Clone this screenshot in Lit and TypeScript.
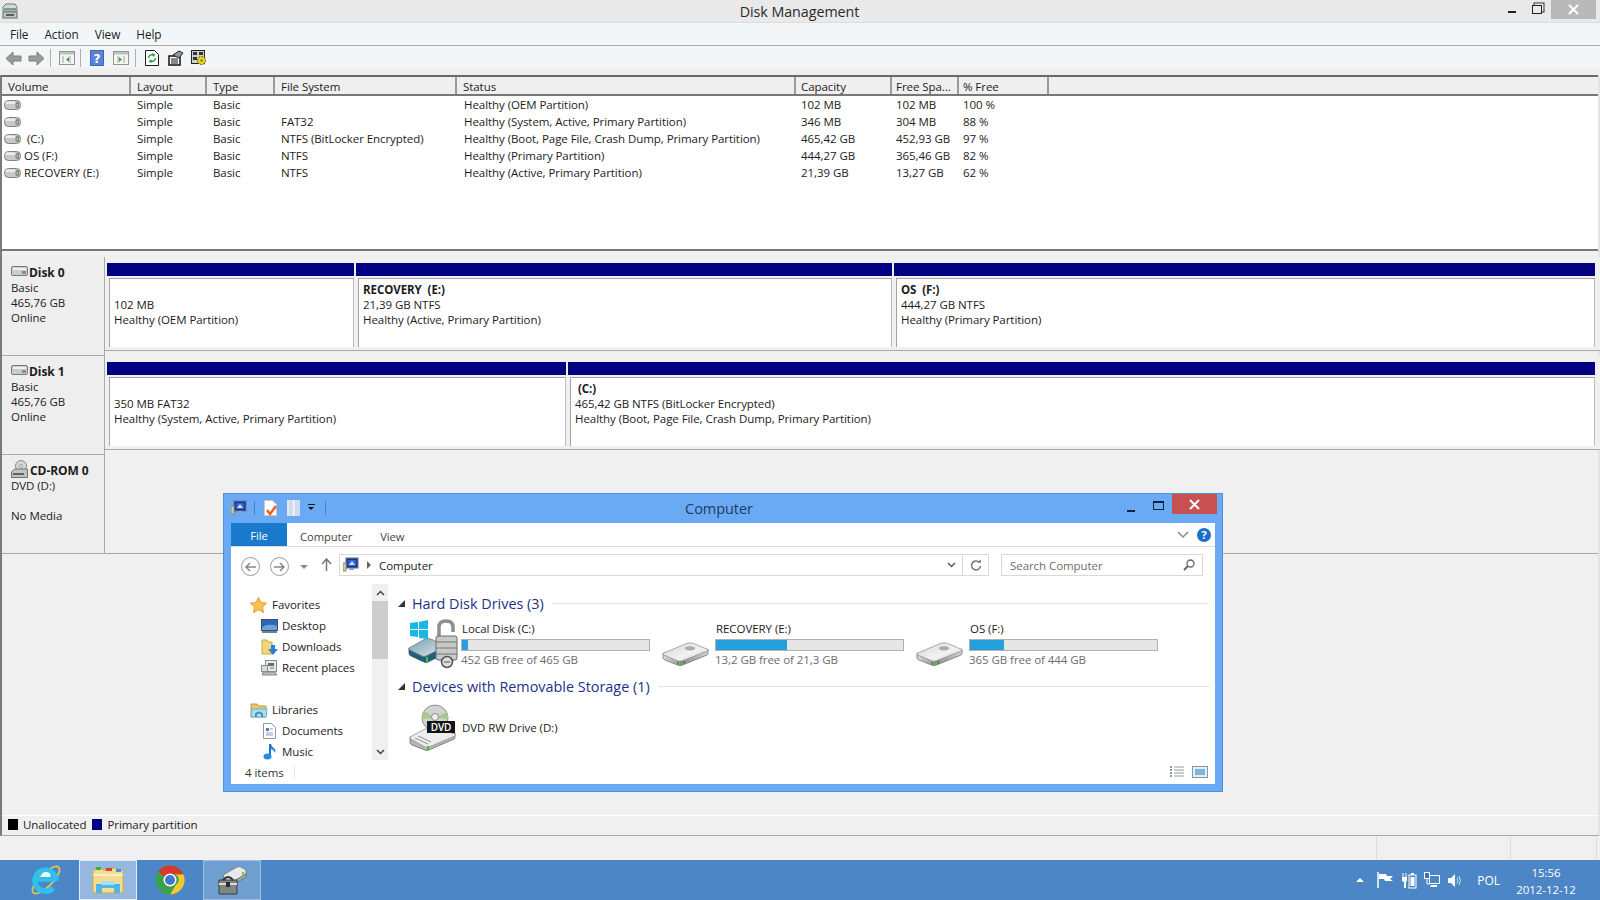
import { LitElement, html, css } from 'lit';
import { customElement } from 'lit/decorators.js';

const volumes = [
  ['', 'Simple', 'Basic', '', 'Healthy (OEM Partition)', '102 MB', '102 MB', '100 %'],
  ['', 'Simple', 'Basic', 'FAT32', 'Healthy (System, Active, Primary Partition)', '346 MB', '304 MB', '88 %'],
  ['\u00a0(C:)', 'Simple', 'Basic', 'NTFS (BitLocker Encrypted)', 'Healthy (Boot, Page File, Crash Dump, Primary Partition)', '465,42 GB', '452,93 GB', '97 %'],
  ['OS (F:)', 'Simple', 'Basic', 'NTFS', 'Healthy (Primary Partition)', '444,27 GB', '365,46 GB', '82 %'],
  ['RECOVERY (E:)', 'Simple', 'Basic', 'NTFS', 'Healthy (Active, Primary Partition)', '21,39 GB', '13,27 GB', '62 %'],
];
const headers = ['Volume', 'Layout', 'Type', 'File System', 'Status', 'Capacity', 'Free Spa...', '% Free', ''];

const disks = [
  {
    name: 'Disk 0', lines: ['Basic', '465,76 GB', 'Online'], icon: 'hdd',
    parts: [
      { w: 249, lines: ['', '102 MB', 'Healthy (OEM Partition)'] },
      { w: 538, title: 'RECOVERY  (E:)', lines: ['21,39 GB NTFS', 'Healthy (Active, Primary Partition)'] },
      { w: 703, title: 'OS  (F:)', lines: ['444,27 GB NTFS', 'Healthy (Primary Partition)'] },
    ],
  },
  {
    name: 'Disk 1', lines: ['Basic', '465,76 GB', 'Online'], icon: 'hdd',
    parts: [
      { w: 461, lines: ['', '350 MB FAT32', 'Healthy (System, Active, Primary Partition)'] },
      { w: 1029, title: '\u00a0(C:)', lines: ['465,42 GB NTFS (BitLocker Encrypted)', 'Healthy (Boot, Page File, Crash Dump, Primary Partition)'] },
    ],
  },
  { name: 'CD-ROM 0', lines: ['DVD (D:)', '', 'No Media'], icon: 'cd', parts: [] },
];

const drives = [
  { name: 'Local Disk (C:)', free: '452 GB free of 465 GB', used: 3, icon: 'locked' },
  { name: 'RECOVERY (E:)', free: '13,2 GB free of 21,3 GB', used: 38, icon: 'plain' },
  { name: 'OS (F:)', free: '365 GB free of 444 GB', used: 18, icon: 'plain' },
];

const smallDisk = html`<svg class="ic" width="17" height="10" viewBox="0 0 17 10">
  <rect x=".5" y=".5" width="16" height="9" rx="4" fill="#c6c9c6" stroke="#7d817f"/>
  <rect x="1.500" y="1.500" width="10" height="2.500" rx="1" fill="#eceeec"/>
  <rect x="11.500" y="2" width="3.500" height="6" rx="1.500" fill="#7f8785"/><rect x="12.500" y="4" width="1.200" height="2.500" fill="#a9d58a"/>
</svg>`;

const labelDisk = html`<svg class="ic" width="17" height="10" viewBox="0 0 17 10">
  <rect x=".5" y=".5" width="16" height="9" rx="1.500" fill="#c9cccb" stroke="#77797a"/>
  <rect x="2" y="2" width="13" height="2" fill="#eff0ef"/><rect x="11" y="5" width="4" height="3" fill="#8a8f8d"/>
</svg>`;

const cdDisk = html`<svg class="ic" width="18" height="18" viewBox="0 0 18 18">
  <circle cx="10" cy="6" r="5.500" fill="#d5d8d6" stroke="#8b8e8d"/><circle cx="10" cy="6" r="1.500" fill="#fff" stroke="#999"/>
  <path d="M.5 12l3-3h13v8.500h-16z" fill="#c2c5c4" stroke="#6e7170"/><rect x="2" y="13" width="11" height="2" fill="#5e6261"/>
</svg>`;

const bigDisk = html`<svg class="ic" width="47" height="27" viewBox="0 0 47 32" preserveAspectRatio="none">
  <defs>
    <linearGradient id="hddTop" x1="0" y1="0" x2="1" y2="1"><stop offset="0" stop-color="#d5d6d5"/><stop offset=".6" stop-color="#f1f2f1"/><stop offset="1" stop-color="#b9bcbb"/></linearGradient>
    <linearGradient id="hddSide" x1="0" y1="0" x2="1" y2="0"><stop offset="0" stop-color="#d6d7d6"/><stop offset=".45" stop-color="#8f9391"/><stop offset="1" stop-color="#d1d3d2"/></linearGradient>
  </defs>
  <path d="M1 17v5q0 2 2 3l13 6q2 1 4 0l25-12q1-1 1-2v-5z" fill="url(#hddSide)" stroke="#696e6c" stroke-width=".8"/>
  <path d="M1 17 25 5q3-1 6 0l14 7q2 1 1 2L20 26q-2 1-4 0L2 19q-2-1-1-2z" fill="url(#hddTop)" stroke="#8e9290" stroke-width=".8"/>
  <ellipse cx="28" cy="11" rx="5" ry="2.500" fill="#a9acab"/>
  <path d="M19 26v4.500" stroke="#39c23c" stroke-width="2"/><path d="M16 27v3M22 26v3" stroke="#3f4341" stroke-width="1"/>
</svg>`;

const lockedIcon = html`<svg class="ic" width="50" height="50" viewBox="0 0 50 50">
  <defs><linearGradient id="lockTop" x1="0" y1="0" x2="1" y2="1"><stop offset="0" stop-color="#75a2b4"/><stop offset="1" stop-color="#dfe7ea"/></linearGradient></defs>
  <g fill="#16b8e6"><path d="M2 4l8-1v7H2zM11 3l9-2v9h-9zM2 11h8v7l-8-1zM11 11h9v9l-9-1z"/></g>
  <path d="M1 29v5q0 2 2 3l13 6q2 1 4 0l18-9v-7z" fill="#1f5f7c" stroke="#39505b" stroke-width=".8"/>
  <path d="M1 29l16-9q3-1 6 0l15 7-20 10q-2 1-4 0L2 31q-2-1-1-2z" fill="url(#lockTop)" stroke="#6e8590" stroke-width=".8"/>
  <path d="M19 38v5" stroke="#39c23c" stroke-width="2"/>
  <path d="M31 18V8q0-6 7-6t7 6v5" fill="none" stroke="#8c8f8e" stroke-width="3.500"/>
  <rect x="28" y="17" width="21" height="24" rx="2" fill="#c6c9c8" stroke="#696c6b"/>
  <path d="M28 23h21M28 29h21M28 35h21" stroke="#727575"/>
  <circle cx="39" cy="43" r="5.500" fill="#dcdedd" stroke="#4f5251" stroke-width="1.500"/><path d="M36 43h6" stroke="#4f5251"/>
</svg>`;

const dvdIcon = html`<svg class="ic" width="47" height="47" viewBox="0 0 47 47">
  <circle cx="26" cy="14" r="13" fill="#cfd3d0" stroke="#8f9491"/>
  <path d="M26 14 15 7a13 13 0 0 0-2 8zM26 14l12-6a13 13 0 0 1 1 7z" fill="#a8c98c"/>
  <circle cx="26" cy="13" r="3.500" fill="#eee" stroke="#888"/>
  <path d="M1 33v5q0 2 2 3l13 5q2 1 4 0l25-11q1-1 1-2v-4z" fill="#b4b7b6" stroke="#696e6c" stroke-width=".8"/>
  <path d="M1 33l15-8h16l14 5q1 1 0 2L20 43q-2 1-4 0L2 35q-2-1-1-2z" fill="#ecedec" stroke="#8e9290" stroke-width=".8"/>
  <path d="M6 34l13 6M9 32l13 6" stroke="#8c8f8e"/>
  <rect x="18" y="17" width="28" height="12" fill="#141414"/>
  <text x="32" y="27" text-anchor="middle" font-family="Open Sans, sans-serif" font-size="10" font-weight="600" fill="#fff">DVD</text>
  <path d="M19 42v4" stroke="#39c23c" stroke-width="2"/>
</svg>`;

const appIcon = html`<svg width="16" height="16" viewBox="0 0 16 16">
  <path d="M1 4l3-3h9l2 3v4H1z" fill="#d4d9d6" stroke="#6d7a76"/><rect x="2" y="5" width="12" height="2" fill="#7d9990"/>
  <rect x="1" y="9" width="14" height="6" fill="#bfc5c2" stroke="#62706b"/><rect x="4" y="11" width="8" height="2" fill="#55625f"/>
</svg>`;

const arrowL = html`<svg width="17" height="15" viewBox="0 0 17 15"><path d="M8 1 1 7.500 8 14v-4h8V5H8z" fill="#9a9c9a" stroke="#7e807e"/></svg>`;
const arrowR = html`<svg width="17" height="15" viewBox="0 0 17 15"><path d="M9 1l7 6.500L9 14v-4H1V5h8z" fill="#9a9c9a" stroke="#7e807e"/></svg>`;
const paneIcon = (right: boolean) => html`<svg width="16" height="14" viewBox="0 0 16 14">
  <rect x=".5" y=".5" width="15" height="13" fill="#f5f6f4" stroke="#8e9794"/><rect x="1" y="1" width="14" height="2.500" fill="#b8c2bf"/>
  <path d="${right ? 'M5 5v7M11 5v7' : 'M4 5v7M11 5v7'}" stroke="#9aa3a0"/>
  <path d="${right ? 'M6 6v5l3-2.500z' : 'M10 6v5L7 8.500z'}" fill="#3f9b4c"/>
</svg>`;
const helpIcon = html`<svg width="14" height="16" viewBox="0 0 14 16"><rect width="14" height="16" fill="#3b64bb"/><rect x="1" y="1" width="12" height="14" fill="#5a82d6"/><text x="7" y="13" text-anchor="middle" font-family="DejaVu Sans, sans-serif" font-size="12" font-weight="700" fill="#fff">?</text></svg>`;
const refreshIcon = html`<svg width="14" height="16" viewBox="0 0 14 16"><path d="M.5.5h9l4 4v11H.5z" fill="#fff" stroke="#1a1a1a"/>
  <path d="M3.500 8a3.500 3.500 0 0 1 5-3" fill="none" stroke="#25a243" stroke-width="1.500"/><path d="M7 3l3.500 1.500L8 7z" fill="#25a243"/>
  <path d="M10.500 8a3.500 3.500 0 0 1-5 3" fill="none" stroke="#25a243" stroke-width="1.500"/><path d="M7 13 3.500 11.500 6 9z" fill="#25a243"/></svg>`;
const propsIcon = html`<svg width="16" height="16" viewBox="0 0 16 16"><path d="M1 6h11v9H1z" fill="#fff" stroke="#111" stroke-width="1.500"/><path d="M3 9h7M3 11h7M3 13h7" stroke="#111"/><path d="M5 5l6-4 4 2-4 5z" fill="#8d979c" stroke="#222"/></svg>`;
const gearIcon = html`<svg width="16" height="16" viewBox="0 0 16 16"><rect x=".5" y=".5" width="13" height="13" fill="#cfd0c9" stroke="#222"/><path d="M2 2h4v3H2zM8 2h4v3H8zM2 7h4v3H2z" fill="#333"/><circle cx="10.500" cy="10.500" r="4" fill="#e9d12a" stroke="#5c5200" stroke-dasharray="2 1"/><circle cx="10.500" cy="10.500" r="1" fill="#5c5200"/></svg>`;

const computerIcon = html`<svg width="16" height="16" viewBox="0 0 16 16"><rect x="3" y="1" width="12" height="10" fill="#173a9a" stroke="#6d7480"/><path d="M5 3h8v6H5z" fill="#2f63d6"/><path d="M6 8l3-4 3 4z" fill="#cfe0ff"/><path d="M7 11h4v2H6z" fill="#99a0a6"/><rect x="0" y="6" width="3" height="8" fill="#cfd78c" stroke="#888"/></svg>`;
const docCheck = html`<svg width="14" height="16" viewBox="0 0 14 16"><path d="M.5.500h8l4 4v11h-12z" fill="#fff" stroke="#c9c9c9"/><path d="M3 10l3 4 6-8" fill="none" stroke="#e4622c" stroke-width="2.500"/></svg>`;
const slimFolder = html`<svg width="13" height="16" viewBox="0 0 13 16"><rect width="13" height="16" fill="#cfdcee"/><rect x="6" width="1.500" height="16" fill="#f1f5fa"/><rect width="2" height="16" fill="#dfe8f3"/></svg>`;

const star = html`<svg width="17" height="16" viewBox="0 0 17 16"><path d="M8.500.5l2.400 5 5.600.7-4 3.800 1 5.500-5-2.700-5 2.700 1-5.500-4-3.800 5.600-.7z" fill="#f7c54e" stroke="#e29b2d"/></svg>`;
const desktop = html`<svg width="17" height="14" viewBox="0 0 17 14"><rect x=".5" y=".5" width="16" height="11" fill="#2a68b8" stroke="#3a4f6d"/><path d="M1 8q7-4 15-1v4H1z" fill="#6ba1dc"/><rect x="1" y="12" width="15" height="2" fill="#6f7f94"/></svg>`;
const downloads = html`<svg width="17" height="16" viewBox="0 0 17 16"><path d="M1 15V1h5l1 2h4v12z" fill="#f1d77a" stroke="#c9a94a"/><path d="M10 6h4v4h3l-5 6-5-6h3z" fill="#2b7fd4"/></svg>`;
const recent = html`<svg width="17" height="16" viewBox="0 0 17 16"><rect x="4.500" y=".5" width="11" height="11" fill="#e6eaea" stroke="#848e8e"/><path d="M7 3h6v3H7z" fill="#62707a"/><rect x=".5" y="5.500" width="6" height="6" fill="#d7dcdc" stroke="#848e8e"/><path d="M2 12h12l2 3H1z" fill="#b6bdbd" stroke="#848e8e"/><path d="M9 8h4" stroke="#62707a"/></svg>`;
const libraries = html`<svg width="18" height="16" viewBox="0 0 18 16"><path d="M1 15V2h6l2 2h7v11z" fill="#e7c766" stroke="#b69a44"/><path d="M1 15l1-8h15l-1 8z" fill="#a9dff0" stroke="#6fb2c9"/><path d="M6 15v-3q3-3 6 0v3" fill="none" stroke="#3d93bd" stroke-width="2"/></svg>`;
const documentIc = html`<svg width="13" height="16" viewBox="0 0 13 16"><path d="M.5.500h8l4 4v11H.5z" fill="#fff" stroke="#8c97a3"/><path d="M3 5h3v3H3z" fill="#4f7fb0"/><path d="M3 10h7M3 12h7M7 6h3" stroke="#8aa0b5"/></svg>`;
const music = html`<svg width="14" height="17" viewBox="0 0 14 17"><path d="M7 1v12" stroke="#1c75c8" stroke-width="2"/><ellipse cx="4.500" cy="13.500" rx="4" ry="3" fill="#2a8be0"/><path d="M8 1q1 3 4 5 1 2 0 4-1-3-4-4z" fill="#2a8be0"/></svg>`;

const ieIcon = html`<svg width="32" height="34" viewBox="0 0 32 34">
  <ellipse cx="16" cy="17" rx="18" ry="6.500" transform="rotate(-45 16 17)" fill="none" stroke="#e8c04a" stroke-width="1.800"/>
  <path d="M26 16.500H6" stroke="#2cc1ef" stroke-width="4.500"/>
  <path d="M26 18A10.500 10.500 0 1 0 23 25" fill="none" stroke="#2cc1ef" stroke-width="5.500"/>
  <path d="M11 14q.5-5 5-5t5 5z" fill="#e4f8fe"/>
</svg>`;
const folderIcon = html`<svg width="32" height="28" viewBox="0 0 32 28">
  <path d="M1 27V4h3l1-2h5l1 2h8l2-2h3l1 2h6v23z" fill="#f2dd93" stroke="#c9a94f"/>
  <rect x="4" y="1" width="5" height="3" fill="#33b44a"/><rect x="14" y="2" width="6" height="3" fill="#d9442f"/><rect x="24" y="3" width="5" height="3" fill="#3d97d9"/>
  <path d="M1 9h30" stroke="#fff"/><path d="M4 27V18h24v9h-6v-5H10v5z" fill="#4cb8e6"/><rect x="10" y="15" width="12" height="4" fill="#a7e0f5"/>
</svg>`;
const chromeIcon = html`<svg width="30" height="30" viewBox="0 0 30 30">
  <circle cx="15" cy="15" r="14.500" fill="#3ba14a"/>
  <path d="M15 .5A14.500 14.500 0 0 1 28.500 9.500H15a5.500 5.500 0 0 0-5 3L3 6.500A14.500 14.500 0 0 1 15 .5z" fill="#d9392b"/>
  <path d="M28.500 9.500A14.500 14.500 0 0 1 15 29.500l6-10a5.500 5.500 0 0 0-1-10z" fill="#f5c92c"/>
  <circle cx="15" cy="15" r="6.500" fill="#fff"/><circle cx="15" cy="15" r="5" fill="#3f78cf"/>
</svg>`;
const mgrIcon = html`<svg width="32" height="30" viewBox="0 0 32 30">
  <path d="M7 10l14-8q2-1 4 0l5 3v4L15 18l-7-4z" fill="#e7e9e8" stroke="#7c8280"/><path d="M8 14v3l7 4 15-9V9L15 18z" fill="#a8adab" stroke="#6d7371"/>
  <path d="M3 15h18v14H3z" fill="#7f8583" stroke="#383d3b"/><path d="M3 19h18" stroke="#d9dbda" stroke-width="2"/><rect x="10" y="17" width="4" height="5" fill="#2b2e2d"/>
  <path d="M7 15q5-6 10 0" fill="none" stroke="#33383a" stroke-width="2"/><rect x="26" y="7" width="2" height="4" fill="#6cc55b"/>
</svg>`;

const trayFlag = html`<svg width="18" height="18" viewBox="0 0 18 18"><path d="M2 1v16" stroke="#fff" stroke-width="1.500"/><path d="M3 3h7l1 2h6l-3 3 3 2h-8l-1-2H3z" fill="#fff"/></svg>`;
const trayBatt = html`<svg width="16" height="17" viewBox="0 0 16 17"><path d="M2 1v4M5 1v4" stroke="#fff"/><path d="M1 5h5v4l-1 1v6H3v-6L1 9z" fill="#fff"/><rect x="8" y="3" width="7" height="13" fill="none" stroke="#fff"/><rect x="9.500" y="5" width="4" height="9" fill="#fff"/><rect x="10" y="1" width="3" height="2" fill="#fff"/></svg>`;
const trayNet = html`<svg width="16" height="17" viewBox="0 0 16 17"><rect x="5.500" y="3.500" width="10" height="8" fill="none" stroke="#fff"/><path d="M7 13h6v2H6z" fill="#fff"/><rect x=".5" y=".5" width="5" height="6" fill="#3a74b6" stroke="#fff"/><path d="M3 7v5h3" fill="none" stroke="#fff"/></svg>`;
const traySound = html`<svg width="16" height="15" viewBox="0 0 16 15"><path d="M1 5h3l4-4v13l-4-4H1z" fill="#fff"/><path d="M10 4.500q2 3 0 6M12 3q3 4.500 0 9" fill="none" stroke="#cfe0f3"/></svg>`;

@customElement('app-root')
export class AppRoot extends LitElement {
  static styles = css`
    :host { display: block; width: 1600px; height: 900px; overflow: hidden; position: relative; font-family: "Open Sans", "Noto Sans", sans-serif; font-size: 11.5px; letter-spacing: -.06px; color: #1c1c1c; background: #f0f0f0; }
    .screen { display: flex; flex-direction: column; height: 900px; }
    .ic { flex: none; display: block; }
    svg { display: block; flex: none; }

    .title { height: 22px; flex: none; display: flex; align-items: flex-start; background: #e9e9e9; border-bottom: 1px solid #dcdcdc; }
    .title-app { padding: 3px 0 0 2px; width: 16px; }
    .title-text { flex: 1; text-align: center; font-size: 14.3px; line-height: 23px; color: #2a2a2a; margin-left: 73px; }
    .winbtns { display: flex; align-items: flex-start; width: 89px; margin-right: 3px; flex: none; }
    .min { width: 8px; height: 2px; background: #222; margin: 11px 0 0 0; }
    .restore { width: 8px; height: 7px; border: 1.500px solid #222; margin: 5px 0 0 16px; box-shadow: 2px -2px 0 -0.5px #e9e9e9, 2px -2px 0 0.5px #333; }
    .close { width: 45px; height: 19px; margin-left: 9px; background: #b9b9b9; color: #fff; display: flex; align-items: center; justify-content: center; }

    .menu { height: 22px; flex: none; display: flex; gap: 16px; padding-left: 10px; align-items: center; background: #f3f6f9; border-bottom: 1px solid #aaa; font-size: 11.8px; }
    .toolbar { height: 20px; padding-top: 2px; flex: none; display: flex; align-items: center; background: #f4f5f7; padding-left: 5px; border-bottom: 1px solid #f0f0f0; }
    .sep { width: 1px; height: 18px; background: #b0b0b0; }
    .gap6 { height: 6px; flex: none; background: #efefef; }

    .panel { height: 761px; flex: none; display: flex; flex-direction: column; border-left: 2px solid #7a7a7a; border-right: 2px solid #e3e3e3; border-bottom: 1px solid #a8a8a8; box-sizing: border-box; }
    .list { height: 176px; flex: none; display: flex; flex-direction: column; background: #fff; border-bottom: 2px solid #777; box-sizing: border-box; }
    .head, .row { display: grid; grid-template-columns: 129px 76px 68px 182px 339px 96px 67px 90px 1fr; }
    .head { background: #efefef; border-top: 2px solid #696969; border-bottom: 2px solid #777; height: 17px; }
    .head div { padding-left: 6px; line-height: 20px; border-right: 2px solid #9a9a9a; white-space: nowrap; overflow: hidden; box-sizing: border-box; }
    .head div:nth-child(n + 6) { padding-left: 5px; }
    .head div:nth-child(n + 7) { padding-left: 4px; }
    .head div:last-child { border-right: none; }
    .row { height: 17px; line-height: 17px; }
    .rows { flex: 1; }
    .row > div { padding-left: 6px; white-space: nowrap; }
    .row > div:nth-child(5) { padding-left: 7px; }
    .row > div:nth-child(6) { padding-left: 5px; }
    .row > div:nth-child(n + 7) { padding-left: 4px; }
    .row > .vol { padding-left: 2px; display: flex; align-items: center; gap: 3px; }

    .disks { flex: 1; padding-top: 6px; background: #f0f0f0; }
    .disk { display: flex; height: 99px; box-sizing: border-box; }
    .disk-label { width: 103px; flex: none; background: #eeeeee; border-right: 1px solid #a9a9a9; border-bottom: 1px solid #a9a9a9; padding: 8px 0 0 9px; box-sizing: border-box; line-height: 15px; }
    .disk-name { display: flex; align-items: center; font-weight: 700; font-size: 12px; height: 15px; }
    .disk-name svg { margin-bottom: 4px; }
    .parts { flex: 1; display: flex; padding: 6px 3px 0 2px; height: 94px; box-sizing: border-box; border-bottom: 1px solid #a9a9a9; background: #f0f0f0; }
    .disk.cd .parts { height: 99px; padding: 0; }
    .part { display: flex; flex-direction: column; flex: none; box-sizing: border-box; padding-right: 2px; height: 87px; }
    .bar { height: 13px; background: #000080; flex: none; }
    .box { margin: 2px 0 3px 2px; flex: 1; background: #fff; border-left: 1px solid #a3a3a3; border-top: 1px solid #a3a3a3; border-right: 1px solid #bdbdbd; padding: 3px 0 0 4px; line-height: 15px; white-space: pre; }
    .box b { font-weight: 700; display: block; height: 15px; }

    .legend { height: 20px; flex: none; display: flex; align-items: center; padding: 0 0 2px 6px; gap: 5px; background: #f0f0f0; border-top: 1px solid #fff; box-sizing: border-box; }
    .sw { width: 10px; height: 11px; }
    .sw.blue { margin-left: 1px; background: #000080; }
    .sw.black { background: #000; }

    .status { height: 24px; flex: none; display: flex; justify-content: flex-end; background: #f0f0f0; padding-right: 3px; }
    .status div { border-left: 1px solid #dcdcdc; }
    .status div:last-child { border-right: 1px solid #dcdcdc; }

    .taskbar { height: 40px; flex: none; display: flex; align-items: stretch; background: #4c86c6; }
    .tb { width: 58px; display: flex; align-items: center; justify-content: center; margin-right: 4px; box-sizing: border-box; }
    .tb.first { margin-left: 17px; }
    .tb.active { background: rgba(255, 255, 255, .42); border: 1px solid rgba(255, 255, 255, .75); }
    .tb.open { background: rgba(255, 255, 255, .2); border: 1px solid rgba(255, 255, 255, .35); }
    .tray { margin-left: auto; display: flex; align-items: center; color: #fff; padding-right: 20px; }
    .tray svg { margin-right: 7px; }
    .caret { width: 0; height: 0; border: 4px solid transparent; border-top: 0; border-bottom-color: #fff; margin-right: 12px; }
    .lang { font-size: 12px; margin: 0 12px 0 7px; }
    .clock { width: 68px; text-align: center; font-size: 11.5px; line-height: 17px; padding-top: 2px; }

    .win { position: absolute; left: 223px; top: 493px; width: 1000px; height: 299px; box-sizing: border-box; background: #6aa9f4; border: 1px solid #4c90de; display: flex; flex-direction: column; padding: 0 7px 7px; }
    .win-title { height: 29px; flex: none; display: flex; align-items: flex-start; }
    .qat { display: flex; align-items: center; height: 27px; gap: 7px; width: 110px; flex: none; }
    .qsep { width: 1px; height: 14px; background: #4a7fc0; }
    .qdrop { width: 7px; height: 6px; border-top: 1px solid #111; position: relative; margin-left: 1px; }
    .qdrop::after { content: ""; position: absolute; top: 2px; left: 0; border: 3.500px solid transparent; border-top-color: #111; border-bottom: 0; }
    .ml2 { margin-left: 2px; }
    .ml3 { margin-left: 3px; }
    .win-name { flex: 1; text-align: center; font-size: 14.5px; line-height: 30px; color: #1d3c5e; padding-right: 30px; }
    .wbtns { display: flex; align-items: flex-start; flex: none; }
    .wmin { width: 8px; height: 2px; background: #10243c; margin: 16px 0 0 0; }
    .wmax { width: 9px; height: 6px; border: 1.500px solid #10243c; border-top-width: 2px; margin: 7px 0 0 18px; }
    .wclose { width: 45px; height: 20px; margin: 0 -2px 0 8px; background: #c75050; color: #fff; display: flex; align-items: center; justify-content: center; }

    .inner { flex: 1; background: #fff; display: flex; flex-direction: column; min-height: 0; }
    .tabs { height: 23px; flex: none; display: flex; align-items: center; border-bottom: 1px solid #dadbdc; color: #444; font-size: 11.2px; }
    .tab-file { width: 56px; height: 23px; padding-top: 2px; box-sizing: border-box; background: #1979ca; color: #fff; display: flex; align-items: center; justify-content: center; margin-right: 13px; }
    .tab { margin-right: 28px; padding-top: 3px; }
    .tab-end { margin-left: auto; display: flex; align-items: center; gap: 8px; padding-right: 4px; }
    .help { width: 14px; height: 14px; border-radius: 50%; background: #1b71c9; color: #fff; font-weight: 700; font-size: 11px; line-height: 14px; text-align: center; }

    .nav { height: 37px; flex: none; display: flex; align-items: flex-start; padding-top: 7px; box-sizing: border-box; }
    .circle { width: 17px; height: 17px; margin-top: 3px; border: 1.500px solid #9a9a9a; border-radius: 50%; display: flex; align-items: center; justify-content: center; }
    .navbtns { width: 108px; flex: none; padding-left: 10px; display: flex; box-sizing: border-box; gap: 10px; }
    .drop { width: 0; height: 0; border: 4px solid transparent; border-top-color: #888; border-bottom: 0; margin: 11px 0 0 1px; }
    .up { margin: 4px 0 0 3px; }
    .addr { width: 650px; height: 22px; flex: none; box-sizing: border-box; border: 1px solid #d9d9d9; display: flex; align-items: center; padding-left: 3px; font-size: 11.5px; }
    .chev { width: 0; height: 0; border: 4px solid transparent; border-left-color: #666; border-right: 0; margin: 0 8px 0 8px; }
    .addr .end { margin-left: auto; display: flex; align-items: center; height: 20px; }
    .addr .dd { width: 22px; display: flex; justify-content: center; border-right: 1px solid #d9d9d9; height: 20px; align-items: center; }
    .addr .rf { width: 25px; display: flex; justify-content: center; }
    .search { width: 202px; height: 22px; flex: none; margin-left: 12px; box-sizing: border-box; border: 1px solid #d9d9d9; display: flex; align-items: center; justify-content: space-between; padding: 0 7px 0 8px; color: #6d6d6d; }

    .body { flex: 1; display: flex; min-height: 0; }
    .tree { width: 141px; flex: none; padding: 10px 0 0 19px; box-sizing: border-box; }
    .tn { height: 21px; display: flex; align-items: center; gap: 5px; white-space: nowrap; }
    .tn.sub { padding-left: 11px; gap: 4px; }
    .tn.spaced { margin-top: 21px; }
    .ticon { width: 17px; display: flex; justify-content: center; flex: none; }
    .scroll { width: 16px; flex: none; background: #f0f0f0; display: flex; flex-direction: column; align-items: center; color: #444; }
    .scroll .thumb { height: 58px; width: 16px; background: #cdcdcd; }
    .scroll .end { height: 17px; display: flex; align-items: center; }
    .content { flex: 1; padding: 9px 0 0 10px; min-width: 0; }
    .group { display: flex; align-items: center; height: 20px; color: #1e3287; font-size: 14.4px; letter-spacing: 0; white-space: nowrap; padding-right: 6px; }
    .tri { width: 0; height: 0; border-left: 7px solid transparent; border-bottom: 7px solid #333; margin: 1px 7px 0 0; }
    .rule { flex: 1; height: 1px; background: #e2e2e2; margin-left: 8px; }
    .items { display: flex; height: 55px; margin-top: 8px; }
    .drive { width: 254px; flex: none; display: flex; }
    .dicon { width: 53px; flex: none; padding-left: 10px; box-sizing: content-box; }
    .dicon.lock { margin-top: -2px; }
    .dicon.plain { padding-top: 18px; }
    .dinfo { width: 189px; flex: none; }
    .dname { line-height: 16px; height: 15px; white-space: nowrap; padding-left: 1px; }
    .cap { height: 12px; margin-top: 3px; border: 1px solid #b0b0b0; background: #e6e6e6; box-sizing: border-box; display: flex; }
    .cap div { background: #26a0da; height: 100%; }
    .dfree { color: #6d6d6d; line-height: 18px; white-space: nowrap; }
    .dvd { display: flex; align-items: center; gap: 6px; padding-left: 11px; margin-top: 6px; height: 50px; }

    .wstatus { height: 24px; flex: none; display: flex; align-items: center; padding-left: 14px; color: #333; }
    .wstatus .bd { height: 14px; width: 1px; background: #e8e8e8; margin-left: 10px; }
    .views { margin-left: auto; padding-right: 7px; display: flex; gap: 7px; }
  `;

  private tool(icon: unknown, gap: number) {
    return html`<div style="margin-left:${gap}px">${icon}</div>`;
  }

  render() {
    return html`
      <div class="screen">
        <div class="title">
          <div class="title-app">${appIcon}</div>
          <div class="title-text">Disk Management</div>
          <div class="winbtns">
            <div class="min"></div>
            <div class="restore"></div>
            <div class="close"><svg width="11" height="11" viewBox="0 0 11 11"><path d="M1 1l9 9M10 1l-9 9" stroke="#fff" stroke-width="2"/></svg></div>
          </div>
        </div>
        <div class="menu"><span>File</span><span>Action</span><span>View</span><span>Help</span></div>
        <div class="toolbar">
          ${this.tool(arrowL, 0)}${this.tool(arrowR, 6)}
          ${this.tool(html`<div class="sep"></div>`, 5)}
          ${this.tool(paneIcon(false), 8)}
          ${this.tool(html`<div class="sep"></div>`, 5)}
          ${this.tool(helpIcon, 9)}${this.tool(paneIcon(true), 9)}
          ${this.tool(html`<div class="sep"></div>`, 6)}
          ${this.tool(refreshIcon, 9)}${this.tool(propsIcon, 9)}${this.tool(gearIcon, 7)}
        </div>
        <div class="gap6"></div>
        <div class="panel">
          <div class="list">
            <div class="head">${headers.map((h) => html`<div>${h}</div>`)}</div>
            <div class="rows">
              ${volumes.map((v) => html`<div class="row">
                <div class="vol">${smallDisk}<span>${v[0]}</span></div>
                ${v.slice(1).map((c) => html`<div>${c}</div>`)}
              </div>`)}
            </div>
          </div>
          <div class="disks">
            ${disks.map((d) => html`<div class="disk ${d.icon === 'cd' ? 'cd' : ''}">
              <div class="disk-label">
                <div class="disk-name">${d.icon === 'cd' ? cdDisk : labelDisk}<span style="margin-left:1px">${d.name}</span></div>
                ${d.lines.map((l) => html`<div style="height:15px">${l}</div>`)}
              </div>
              <div class="parts">
                ${d.parts.map((p) => html`<div class="part" style="width:${p.w}px">
                  <div class="bar"></div>
                  <div class="box">${p.title ? html`<b>${p.title}</b>` : ''}${p.lines.map((l) => html`<div style="height:15px">${l}</div>`)}</div>
                </div>`)}
              </div>
            </div>`)}
          </div>
          <div class="legend"><div class="sw black"></div><span>Unallocated</span><div class="sw blue"></div><span>Primary partition</span></div>
        </div>
        <div class="status"><div style="width:133px"></div><div style="width:85px"></div></div>
        <div class="taskbar">
          <div class="tb first">${ieIcon}</div>
          <div class="tb active">${folderIcon}</div>
          <div class="tb">${chromeIcon}</div>
          <div class="tb open">${mgrIcon}</div>
          <div class="tray">
            <div class="caret"></div>
            ${trayFlag}${trayBatt}${trayNet}${traySound}
            <div class="lang">POL</div>
            <div class="clock">15:56<br />2012-12-12</div>
          </div>
        </div>
      </div>

      <div class="win">
        <div class="win-title">
          <div class="qat">${computerIcon}<div class="qsep"></div><div class="ml2">${docCheck}</div><div class="ml2">${slimFolder}</div><div class="qdrop"></div><div class="qsep ml3"></div></div>
          <div class="win-name">Computer</div>
          <div class="wbtns">
            <div class="wmin"></div><div class="wmax"></div>
            <div class="wclose"><svg width="11" height="11" viewBox="0 0 11 11"><path d="M1 1l9 9M10 1l-9 9" stroke="#fff" stroke-width="2"/></svg></div>
          </div>
        </div>
        <div class="inner">
          <div class="tabs">
            <div class="tab-file">File</div><div class="tab">Computer</div><div class="tab">View</div>
            <div class="tab-end">
              <svg width="12" height="8" viewBox="0 0 12 8"><path d="M1 1l5 5 5-5" fill="none" stroke="#8a8a8a" stroke-width="1.500"/></svg>
              <div class="help">?</div>
            </div>
          </div>
          <div class="nav">
            <div class="navbtns">
              <div class="circle"><svg width="11" height="10" viewBox="0 0 11 10"><path d="M5 1 1 5l4 4M1 5h10" fill="none" stroke="#888" stroke-width="1.500"/></svg></div>
              <div class="circle"><svg width="11" height="10" viewBox="0 0 11 10"><path d="M6 1l4 4-4 4M10 5H0" fill="none" stroke="#888" stroke-width="1.500"/></svg></div>
              <div class="drop"></div>
              <svg class="up" width="11" height="13" viewBox="0 0 11 13"><path d="M1 6l4.500-5L10 6M5.500 1v12" fill="none" stroke="#777" stroke-width="1.500"/></svg>
            </div>
            <div class="addr">
              ${computerIcon}<div class="chev"></div><span>Computer</span>
              <div class="end">
                <div class="dd"><svg width="9" height="6" viewBox="0 0 9 6"><path d="M1 1l3.500 3.500L8 1" fill="none" stroke="#555" stroke-width="1.500"/></svg></div>
                <div class="rf"><svg width="12" height="12" viewBox="0 0 12 12"><path d="M9.500 3.500A4.500 4.500 0 1 0 10.500 7" fill="none" stroke="#777" stroke-width="1.500"/><path d="M7 3.500h4v-3z" fill="#777"/></svg></div>
              </div>
            </div>
            <div class="search"><span>Search Computer</span><svg width="12" height="12" viewBox="0 0 12 12"><circle cx="7.500" cy="4.500" r="3.500" fill="none" stroke="#666" stroke-width="1.300"/><path d="M5 7l-4 4" stroke="#666" stroke-width="2"/></svg></div>
          </div>
          <div class="body">
            <div class="tree">
              <div class="tn"><div class="ticon">${star}</div>Favorites</div>
              <div class="tn sub"><div class="ticon">${desktop}</div>Desktop</div>
              <div class="tn sub"><div class="ticon">${downloads}</div>Downloads</div>
              <div class="tn sub"><div class="ticon">${recent}</div>Recent places</div>
              <div class="tn spaced"><div class="ticon">${libraries}</div>Libraries</div>
              <div class="tn sub"><div class="ticon">${documentIc}</div>Documents</div>
              <div class="tn sub"><div class="ticon">${music}</div>Music</div>
            </div>
            <div class="scroll">
              <div class="end"><svg width="9" height="6" viewBox="0 0 9 6"><path d="M1 5l3.500-3.500L8 5" fill="none" stroke="#444" stroke-width="1.500"/></svg></div>
              <div class="thumb"></div>
              <div style="flex:1"></div>
              <div class="end"><svg width="9" height="6" viewBox="0 0 9 6"><path d="M1 1l3.500 3.500L8 1" fill="none" stroke="#444" stroke-width="1.500"/></svg></div>
            </div>
            <div class="content">
              <div class="group"><div class="tri"></div>Hard Disk Drives (3)<div class="rule"></div></div>
              <div class="items">
                ${drives.map((d) => html`<div class="drive">
                  <div class="dicon ${d.icon === 'locked' ? 'lock' : 'plain'}">${d.icon === 'locked' ? lockedIcon : bigDisk}</div>
                  <div class="dinfo">
                    <div class="dname">${d.name}</div>
                    <div class="cap"><div style="width:${d.used}%"></div></div>
                    <div class="dfree">${d.free}</div>
                  </div>
                </div>`)}
              </div>
              <div class="group"><div class="tri"></div>Devices with Removable Storage (1)<div class="rule"></div></div>
              <div class="dvd">${dvdIcon}<span>DVD RW Drive (D:)</span></div>
            </div>
          </div>
          <div class="wstatus">
            4 items<div class="bd"></div>
            <div class="views">
              <svg width="16" height="12" viewBox="0 0 16 12"><path d="M5 1h10M5 4h10M5 7h10M5 10h10" stroke="#8f9aa5"/><path d="M1 0h2v2H1zM1 3h2v2H1zM1 6h2v2H1zM1 9h2v2H1z" fill="#8f9aa5"/></svg>
              <svg width="16" height="12" viewBox="0 0 16 12"><rect x=".5" y=".5" width="15" height="11" fill="#e3eef7" stroke="#7e98ae"/><rect x="3" y="3" width="10" height="6" fill="#7fb3d9"/></svg>
            </div>
          </div>
        </div>
      </div>
    `;
  }
}
